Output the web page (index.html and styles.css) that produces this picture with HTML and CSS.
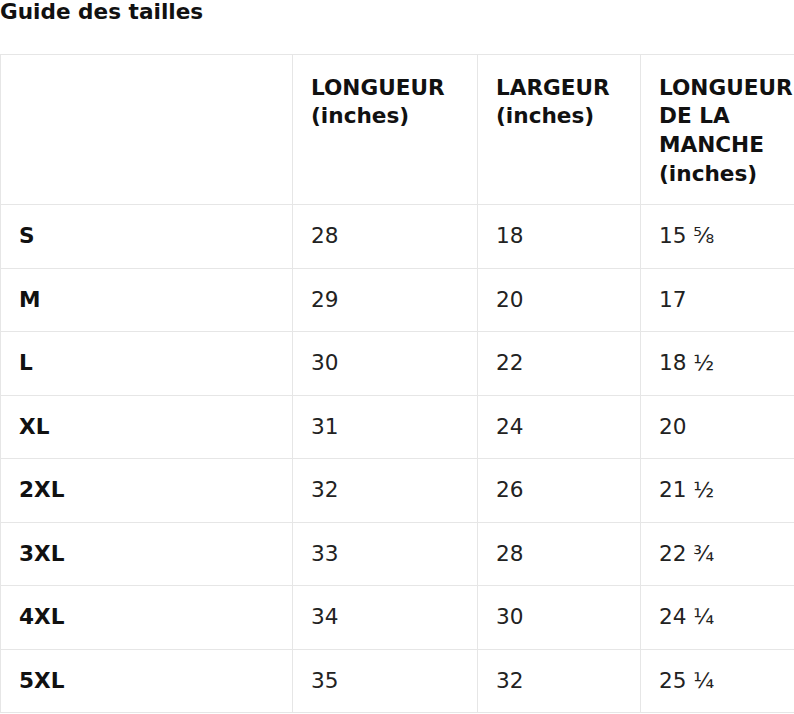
FILE: index.html
```html
<!DOCTYPE html>
<html lang="fr">
<head>
<meta charset="utf-8">
<title>Guide des tailles</title>
<link rel="stylesheet" href="styles.css">
</head>
<body>
<h2 class="title">Guide des tailles</h2>
<table class="sizes">
  <colgroup>
    <col class="c1"><col class="c2"><col class="c3"><col class="c4">
  </colgroup>
  <thead>
    <tr>
      <th></th>
      <th>LONGUEUR (inches)</th>
      <th>LARGEUR (inches)</th>
      <th>LONGUEUR DE LA MANCHE (inches)</th>
    </tr>
  </thead>
  <tbody>
    <tr><th>S</th><td>28</td><td>18</td><td>15 ⅝</td></tr>
    <tr><th>M</th><td>29</td><td>20</td><td>17</td></tr>
    <tr><th>L</th><td>30</td><td>22</td><td>18 ½</td></tr>
    <tr><th>XL</th><td>31</td><td>24</td><td>20</td></tr>
    <tr><th>2XL</th><td>32</td><td>26</td><td>21 ½</td></tr>
    <tr><th>3XL</th><td>33</td><td>28</td><td>22 ¾</td></tr>
    <tr><th>4XL</th><td>34</td><td>30</td><td>24 ¼</td></tr>
    <tr><th>5XL</th><td>35</td><td>32</td><td>25 ¼</td></tr>
  </tbody>
</table>
</body>
</html>
```
FILE: styles.css
```css
html {
  overflow: hidden;
}
body {
  margin: 0;
  font-family: "DejaVu Sans", sans-serif;
  color: #111;
  background: #fff;
}
.title {
  margin: 0;
  font-size: 21.6px;
  line-height: 24px;
  font-weight: bold;
  height: 54px;
}
.sizes {
  border-collapse: collapse;
  table-layout: fixed;
  width: 830px;
  font-size: 21.6px;
  line-height: 28.7px;
}
.c1 { width: 292px; }
.c2 { width: 185px; }
.c3 { width: 163px; }
.c4 { width: 190px; }
.sizes th,
.sizes td {
  border: 1px solid #e6e6e6;
  padding: 16.9px 18px;
  text-align: left;
}
.sizes thead th {
  vertical-align: top;
  font-weight: bold;
  padding-top: 18.5px;
  padding-bottom: 16px;
}
.sizes tbody th {
  font-weight: bold;
}
.sizes td {
  font-weight: normal;
  color: #222;
}
```
